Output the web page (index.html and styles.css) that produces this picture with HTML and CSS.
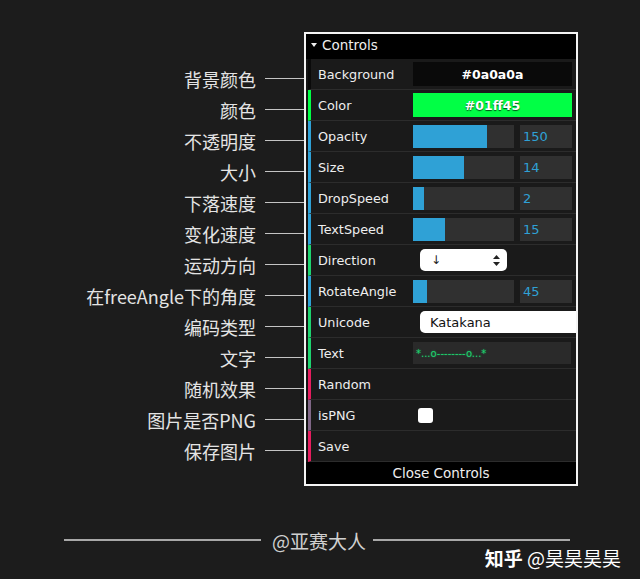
FILE: index.html
```html
<!DOCTYPE html>
<html lang="zh">
<head>
<meta charset="utf-8">
<title>Controls</title>
<link rel="stylesheet" href="styles.css">
</head>
<body>
<div class="stage">
  <div class="notes">
    <div class="note"><span>背景颜色</span><i class="tick"></i></div>
    <div class="note"><span>颜色</span><i class="tick"></i></div>
    <div class="note"><span>不透明度</span><i class="tick"></i></div>
    <div class="note"><span>大小</span><i class="tick"></i></div>
    <div class="note"><span>下落速度</span><i class="tick"></i></div>
    <div class="note"><span>变化速度</span><i class="tick"></i></div>
    <div class="note"><span>运动方向</span><i class="tick"></i></div>
    <div class="note"><span>在freeAngle下的角度</span><i class="tick"></i></div>
    <div class="note"><span>编码类型</span><i class="tick"></i></div>
    <div class="note"><span>文字</span><i class="tick"></i></div>
    <div class="note"><span>随机效果</span><i class="tick"></i></div>
    <div class="note"><span>图片是否PNG</span><i class="tick"></i></div>
    <div class="note"><span>保存图片</span><i class="tick"></i></div>
  </div>
  <div class="panel">
    <div class="title">
      <svg class="caret" width="6" height="4" viewBox="0 0 6 4"><path d="M0 0H6L3 4Z" fill="#eee"/></svg>
      <span>Controls</span>
    </div>
    <ul class="rows">
      <li class="row bar-bg"><span class="name">Background</span><div class="val"><div class="swatch sw-dark">#0a0a0a</div></div></li>
      <li class="row bar-color"><span class="name">Color</span><div class="val"><div class="swatch sw-green">#01ff45</div></div></li>
      <li class="row bar-num"><span class="name">Opacity</span><div class="val"><div class="slider"><div class="fill" style="width:74px"></div></div><div class="num">150</div></div></li>
      <li class="row bar-num"><span class="name">Size</span><div class="val"><div class="slider"><div class="fill" style="width:51px"></div></div><div class="num">14</div></div></li>
      <li class="row bar-num"><span class="name">DropSpeed</span><div class="val"><div class="slider"><div class="fill" style="width:11px"></div></div><div class="num">2</div></div></li>
      <li class="row bar-num"><span class="name">TextSpeed</span><div class="val"><div class="slider"><div class="fill" style="width:32px"></div></div><div class="num">15</div></div></li>
      <li class="row bar-str"><span class="name">Direction</span><div class="val"><div class="select sel-dir"><span class="arrow">↓</span><svg width="7" height="11" viewBox="0 0 7 11"><path d="M3.5 0L7 4H0Z M3.5 11L0 7H7Z" fill="#222"/></svg></div></div></li>
      <li class="row bar-num"><span class="name">RotateAngle</span><div class="val"><div class="slider"><div class="fill" style="width:14px"></div></div><div class="num">45</div></div></li>
      <li class="row bar-str"><span class="name">Unicode</span><div class="val"><div class="select sel-wide">Katakana</div></div></li>
      <li class="row bar-str"><span class="name">Text</span><div class="val"><div class="textbox">*...o--------o...*</div></div></li>
      <li class="row bar-fn"><span class="name">Random</span><div class="val"></div></li>
      <li class="row bar-bool"><span class="name">isPNG</span><div class="val"><div class="check"></div></div></li>
      <li class="row bar-fn"><span class="name">Save</span><div class="val"></div></li>
    </ul>
    <div class="close">Close Controls</div>
  </div>
</div>
<div class="footer"><i class="rule"></i><span class="sig">@亚赛大人</span><i class="rule"></i></div>
<div class="mark"><b>知乎</b> @昊昊昊昊</div>
</body>
</html>
```
FILE: styles.css
```css
body {
  margin: 0;
  width: 640px;
  height: 579px;
  overflow: hidden;
  background: #1c1c1c;
  font-family: "DejaVu Sans", sans-serif;
}
.stage {
  display: flex;
  padding-top: 32px;
}
.notes {
  width: 304px;
  padding-top: 31px;
  display: flex;
  flex-direction: column;
}
.note {
  height: 31px;
  display: flex;
  align-items: center;
  justify-content: flex-end;
  font-family: "Noto Sans CJK SC", sans-serif;
  font-size: 18px;
  color: #e4e4e4;
}
.tick {
  width: 39px;
  height: 1px;
  background: #c4c4c4;
  margin-left: 9px;
}
.panel {
  width: 270px;
  border: 2px solid #f4f4f4;
  background: #141414;
  overflow: hidden;
}
.title {
  height: 25px;
  box-sizing: border-box;
  padding: 0 0 3px 5px;
  background: #000;
  color: #eee;
  display: flex;
  align-items: center;
  gap: 5px;
  font-size: 13.5px;
}
.rows {
  list-style: none;
  margin: 0;
  padding: 0 0 0 2px;
}
.row {
  height: 30px;
  border-bottom: 1px solid #2c2c2c;
  border-left: 3px solid #2fa1d6;
  background: #1a1a1a;
  display: flex;
  align-items: center;
}
.bar-bg { border-left-color: #0a0a0a; }
.bar-color { border-left-color: #01ff45; }
.bar-num { border-left-color: #2fa1d6; }
.bar-str { border-left-color: #1ed36f; }
.bar-fn { border-left-color: #e61d5f; }
.bar-bool { border-left-color: #806787; }
.name {
  width: 95px;
  padding-left: 7px;
  color: #eee;
  font-size: 12.8px;
  white-space: nowrap;
}
.val {
  width: 159px;
  display: flex;
  align-items: center;
  flex-shrink: 0;
}
.swatch {
  width: 159px;
  height: 24px;
  display: flex;
  align-items: center;
  justify-content: center;
  font-weight: bold;
  font-size: 12.5px;
  color: #fff;
}
.sw-dark { background: #0a0a0a; }
.sw-green {
  background: #01ff45;
  text-shadow: 0 1px 1px rgba(0, 0, 0, 0.7);
}
.slider {
  width: 101px;
  height: 23px;
  background: #303030;
  margin-right: 6px;
}
.fill {
  height: 100%;
  background: #2fa1d6;
}
.num {
  width: 52px;
  height: 23px;
  box-sizing: border-box;
  padding-left: 3px;
  background: #303030;
  color: #2fa1d6;
  font-size: 13px;
  display: flex;
  align-items: center;
}
.select {
  margin-left: 7px;
  height: 22px;
  background: #fff;
  border-radius: 5px;
  display: flex;
  align-items: center;
  box-sizing: border-box;
  color: #111;
  font-size: 13px;
  flex-shrink: 0;
}
.sel-dir {
  width: 87px;
  justify-content: space-between;
  padding: 0 7px 0 11px;
}
.arrow {
  font-size: 12px;
  color: #222;
}
.sel-wide {
  width: 175px;
  padding-left: 10px;
}
.textbox {
  width: 158px;
  height: 22px;
  box-sizing: border-box;
  padding-left: 3px;
  background: #2a2a2a;
  color: #1ed36f;
  font-size: 10px;
  display: flex;
  align-items: center;
  text-shadow: 0 0 2px rgba(30, 211, 111, 0.6);
}
.check {
  margin-left: 5px;
  width: 15px;
  height: 15px;
  background: #fff;
  border-radius: 3px;
}
.close {
  height: 22px;
  line-height: 22px;
  background: #000;
  color: #eee;
  text-align: center;
  font-size: 13.5px;
}
.footer {
  display: flex;
  align-items: center;
  height: 26px;
  margin-top: 41px;
  padding-left: 64px;
}
.rule {
  width: 197px;
  height: 2px;
  background: #a8a8a8;
}
.sig {
  margin: 0 7px 0 11px;
  font-family: "Noto Sans CJK SC", sans-serif;
  font-size: 19px;
  color: #d0d0d0;
  white-space: nowrap;
}
.mark {
  margin-top: -6px;
  text-align: right;
  padding-right: 19px;
  font-family: "Noto Sans CJK SC", sans-serif;
  font-size: 19px;
  line-height: 22px;
  color: #fff;
}
.mark b {
  font-weight: bold;
}
```
